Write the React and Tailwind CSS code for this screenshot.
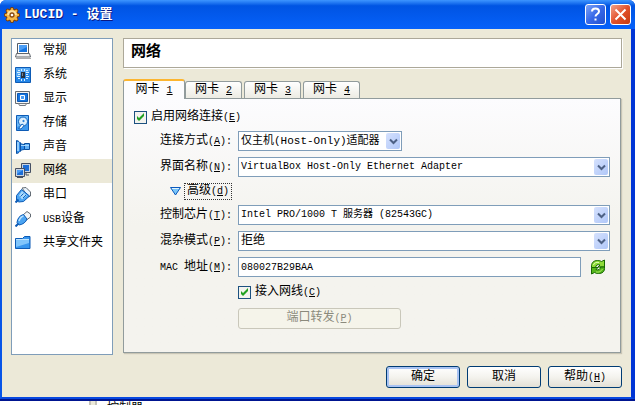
import React, { useState } from 'react';

const GearIcon = () => (
  <svg width="16" height="16" viewBox="0 0 16 16" aria-hidden="true">
    <g stroke="#7a3c08" strokeWidth="4.4" strokeLinecap="round">
      <path d="M8 2.2v11.6M2.2 8h11.6M3.8 3.8l8.4 8.4M12.2 3.8l-8.4 8.4" />
    </g>
    <circle cx="8" cy="8" r="6" fill="#7a3c08" />
    <g stroke="#f3b23c" strokeWidth="2.6" strokeLinecap="round">
      <path d="M8 2.2v11.6M2.2 8h11.6M3.8 3.8l8.4 8.4M12.2 3.8l-8.4 8.4" />
    </g>
    <circle cx="8" cy="8" r="5.3" fill="#f5b94a" />
    <path d="M3.2 8a4.8 4.8 0 0 1 9.6 0z" fill="#ffe3a0" />
    <circle cx="8" cy="8" r="2" fill="#fff" stroke="#8a4a10" strokeWidth="1.3" />
  </svg>
);

const GeneralIcon = () => (
  <svg width="16" height="16" viewBox="0 0 16 16" aria-hidden="true">
    <path d="M2.5.5h11v10h-11z" fill="#fff" stroke="#555d66" />
    <path d="M4 2h8v7H4z" fill="#1474e0" />
    <path d="M4 2h8v2L4 8z" fill="#4b9df5" />
    <path d="M1.5 10.5h13l1 3.5H.5z" fill="#f1f1f1" stroke="#60666c" />
    <path d="M1 15.500h15" stroke="#aaa" />
  </svg>
);

const SystemIcon = () => (
  <svg width="16" height="16" viewBox="0 0 16 16" aria-hidden="true">
    <path d="M.5.5h15v15H.5z" fill="#2486e8" stroke="#0d5bb5" />
    <path d="M1 1h14v3L1 10z" fill="#55a9f5" />
    <path
      d="M3 3.5h2M2 5.5h3M3 7.5h2M2 9.5h3M3 11.5h2M11 3.5h2M11 5.5h3M11 7.5h2M11 9.5h3M11 11.5h2M6.5 2v2M9.500 2v2M6.500 12v2M9.500 12v2"
      stroke="#d8efff"
    />
    <path d="M6 5h4v6H6z" fill="#26323f" />
    <path d="M7 6h1v3H7z" fill="#7d8893" />
  </svg>
);

const DisplayIcon = () => (
  <svg width="16" height="16" viewBox="0 0 16 16" aria-hidden="true">
    <path d="M.5.5h14v12H.5z" fill="#f4f4f4" stroke="#666c72" />
    <path d="M2.5 2.5h10v8h-10z" fill="#1474e0" stroke="#0b57b0" />
    <path d="M5.5 4.5h4v4h-4z" fill="#4b9df5" stroke="#fff" />
    <path d="M3.5 12.5h8l-1 2h-6z" fill="#f4f4f4" stroke="#73787e" />
  </svg>
);

const StorageIcon = () => (
  <svg width="16" height="16" viewBox="0 0 16 16" aria-hidden="true">
    <path d="M1.5.5h12v15h-12z" fill="#3c98ee" stroke="#0d5bb5" />
    <path d="M2 1h11v5L2 12z" fill="#6bb8f8" />
    <circle cx="8" cy="6.5" r="4.5" fill="#d5edff" stroke="#1264bd" />
    <circle cx="8.5" cy="6" r="1.7" fill="#2b84dc" stroke="#fff" />
    <path d="M3.5 13.5L7 9l2 1.5-3 3.5z" fill="#fff" stroke="#1264bd" />
  </svg>
);

const AudioIcon = () => (
  <svg width="16" height="16" viewBox="0 0 16 16" aria-hidden="true">
    <path d="M1.5 1.5c3 0 3 4 8 4v5c-5 0-5 4-8 4z" fill="#2f8ceb" stroke="#0b4f9f" />
    <path d="M9.5 4.5h5v6h-5z" fill="#63b1f6" stroke="#0b4f9f" />
    <path d="M3 3v9" stroke="#93cdfb" strokeWidth="2" />
    <path d="M5 6.500h9" stroke="#a8d8fd" />
    <path d="M5.500 3.500v9" stroke="#0b4f9f" />
  </svg>
);

const NetworkIcon = () => (
  <svg width="16" height="16" viewBox="0 0 16 16" aria-hidden="true">
    <path d="M6.5.5h9v9h-9z" fill="#c9d5e3" stroke="#454f62" />
    <path d="M8 2h6v6H8z" fill="#1d6fd8" />
    <path d="M11 10v2h3" stroke="#454f62" fill="none" />
    <path d="M.5 5.5h9v8h-9z" fill="#c9d5e3" stroke="#454f62" />
    <path d="M2 7h6v5H2z" fill="#1d6fd8" />
    <path d="M2 7h6L2 11z" fill="#4b9df5" />
    <path d="M2 14.500h6" stroke="#454f62" />
  </svg>
);

const SerialIcon = () => (
  <svg width="16" height="16" viewBox="0 0 16 16" aria-hidden="true">
    <path d="M7 1l4-.5L15.500 5v4l-2 1z" fill="#e9f3fc" stroke="#646c75" />
    <path d="M1.500 8.500l5-6 8 6.500-6 5.500-5 .5-2-2z" fill="#4ba4f2" stroke="#0d5bb5" />
    <path d="M4 8.500L7 4l5 4.500-5 4z" fill="#a9d9fc" />
    <path d="M5.500 9.500l3-3M8 11l3-3" stroke="#1264bd" />
    <path d="M.5 15.500l3-3" stroke="#0d5bb5" strokeWidth="2" />
  </svg>
);

const UsbIcon = () => (
  <svg width="16" height="16" viewBox="0 0 16 16" aria-hidden="true">
    <path d="M8 4l4-3.500L15.500 3v3l-4 3z" fill="#f3f6f8" stroke="#626a72" />
    <path d="M8.500 3.500c-4 1-6 4-6.500 8l2 2.500c4-.5 7-3 8-6z" fill="#4ba4f2" stroke="#0d5bb5" />
    <path d="M4 10c1-3 2.500-4.500 4.500-5" stroke="#b9e1fd" strokeWidth="1.5" fill="none" />
    <path d="M.5 15.500l3-3" stroke="#0d5bb5" strokeWidth="2" />
  </svg>
);

const FolderIcon = () => (
  <svg width="16" height="16" viewBox="0 0 16 16" aria-hidden="true">
    <path d="M.5 13.500V3.500h7l2-2h5.500v12z" fill="#3796ee" stroke="#0d5bb5" />
    <path d="M1 5h13v3L1 12z" fill="#80c5fb" />
    <path d="M1 4.500h13" stroke="#c0e5ff" />
  </svg>
);

const RefreshIcon = () => (
  <svg width="16" height="16" viewBox="0 0 16 16" aria-hidden="true">
    <path d="M1.5 8.500C1 3.500 4 1.500 7.500 1.500c2 0 3 .5 4 1l3-1.500v7H8l2-2c-2.500-1-4 0-4.500 2.500z" fill="#8edb38" stroke="#176800" />
    <path d="M14.500 8c.5 5-2.500 6.500-6 6.500-2 0-3-.5-4-1l-3 1.500V8.500H8l-2 2c2.500 1 4 0 4.500-2.500z" fill="#55b51b" stroke="#176800" />
    <path d="M3.500 6c.5-2 2.500-3 5.500-2.500" stroke="#dcffb0" fill="none" />
    <path d="M6 13c3 .5 5-.5 6.500-3" stroke="#a8ea60" fill="none" />
  </svg>
);

const sections = [
  { name: '常规', icon: GeneralIcon },
  { name: '系统', icon: SystemIcon },
  { name: '显示', icon: DisplayIcon },
  { name: '存储', icon: StorageIcon },
  { name: '声音', icon: AudioIcon },
  { name: '网络', icon: NetworkIcon },
  { name: '串口', icon: SerialIcon },
  { name: '设备', prefix: 'USB', icon: UsbIcon },
  { name: '共享文件夹', icon: FolderIcon },
];

const Key = ({ children, colon }) => (
  <span className="text-[10px]">
    (<u>{children}</u>){colon && ':'}
  </span>
);

const Field = ({ id, label, hotkey, children }) => (
  <div className="flex items-center">
    <label htmlFor={id} className="w-[104px] shrink-0 pr-1.5 text-right whitespace-nowrap">
      {label}
      <Key colon>{hotkey}</Key>
    </label>
    {children}
  </div>
);

const Select = ({ id, options, className }) => (
  <div className={`relative h-5 border border-[#7f9db9] bg-white ${className}`}>
    <select id={id} className="block h-full w-full appearance-none bg-transparent pr-5 pl-0.5 outline-none">
      {options.map((option) => (
        <option key={option}>{option}</option>
      ))}
    </select>
    <span className="pointer-events-none absolute inset-y-px right-px flex w-3.5 items-center justify-center rounded-xs bg-gradient-to-br from-[#d5e1fd] to-[#b0c7f8]">
      <svg width="9" height="7" viewBox="0 0 9 7" aria-hidden="true">
        <path d="M1 1.5l3.5 3.5L8 1.5" fill="none" stroke="#4d6185" strokeWidth="2" />
      </svg>
    </span>
  </div>
);

const Checkbox = ({ checked, onChange, label, hotkey }) => (
  <label className="flex h-4 items-center gap-1">
    <span className="relative flex">
      <input
        type="checkbox"
        checked={checked}
        onChange={onChange}
        className="size-[13px] appearance-none border border-[#1c5180] bg-[#f3f3ee]"
      />
      {checked && (
        <svg className="pointer-events-none absolute inset-0" width="13" height="13" viewBox="0 0 13 13" aria-hidden="true">
          <path d="M3 5v3l2 2 5-5V2L5 7z" fill="#21a121" />
        </svg>
      )}
    </span>
    <span>
      {label}
      <Key>{hotkey}</Key>
    </span>
  </label>
);

const buttonStyle =
  'h-[22px] w-[74px] rounded-[3px] border border-[#003c74] bg-gradient-to-b from-white via-[#f4f3ee] to-[#e3e0d5] whitespace-nowrap';

export default function App() {
  const [section, setSection] = useState('网络');
  const [tab, setTab] = useState(1);
  const [enabled, setEnabled] = useState(true);
  const [cable, setCable] = useState(true);
  const [advanced, setAdvanced] = useState(true);
  const [mac, setMac] = useState('080027B29BAA');

  return (
    <div className="flex min-h-screen flex-col bg-white font-['Liberation_Mono','Noto_Sans_CJK_SC',monospace] text-xs leading-4 text-black">
      <div className="flex flex-1 flex-col rounded-t-md border-b-2 border-[#001590] bg-[#0843dc]">
        {/* Title bar */}
        <header className="flex h-[29px] items-center gap-1 rounded-t-md bg-gradient-to-b from-[#3d95ff] via-[#0054e3] via-20% to-[#0661fa] px-1">
          <GearIcon />
          <h1 className="flex-1 text-[13px] font-bold text-white [text-shadow:1px_1px_#0a1883]">LUCID - 设置</h1>
          <button aria-label="帮助" className="flex size-[21px] items-center justify-center rounded-[3px] border border-white bg-gradient-to-br from-[#7da1f5] via-[#3768e8] to-[#2050cf]">
            <svg width="13" height="15" viewBox="0 0 13 15" aria-hidden="true">
              <path d="M3 4.5c0-4 7-4 7 0 0 2.5-3.5 2.5-3.5 5M6.5 11.5v2" fill="none" stroke="#fff" strokeWidth="2" />
            </svg>
          </button>
          <button aria-label="关闭" className="flex size-[21px] items-center justify-center rounded-[3px] border border-white bg-gradient-to-br from-[#f0a088] via-[#e3512a] to-[#c53a10]">
            <svg width="13" height="13" viewBox="0 0 13 13" aria-hidden="true">
              <path d="M1.5 1.5l10 10M11.5 1.5l-10 10" stroke="#fff" strokeWidth="2" />
            </svg>
          </button>
        </header>

        <div className="flex flex-1 flex-col border-r-4 border-b-2 border-l-2 border-r-[#0035d5] border-b-[#0848e0] border-l-[#0855e8] bg-[#ece9d8] p-[9px]">
          <div className="flex flex-1 gap-2.5">
            {/* Sections */}
            <nav className="w-[102px] border border-[#7f9db9] bg-white">
              {sections.map(({ name, prefix, icon: Icon }) => (
                <button
                  key={name}
                  onClick={() => setSection(name)}
                  className={`flex h-6 w-full items-center gap-3 pl-[3px] whitespace-nowrap ${section === name ? 'bg-[#ece9d8]' : ''}`}
                >
                  <Icon />
                  <span>
                    {prefix && <span className="text-[10px]">{prefix}</span>}
                    {name}
                  </span>
                </button>
              ))}
            </nav>

            <main className="flex flex-1 flex-col pb-0.5">
              <h2 className="h-[30px] border border-[#aca899] bg-white px-[7px] text-[15px] leading-7 font-bold shadow-[1px_1px_#fff]">{section}</h2>

              {/* Tabs */}
              <div role="tablist" className="mt-[11px] flex h-[19px] items-end gap-0.5">
                {[1, 2, 3, 4].map((n) => (
                  <button
                    key={n}
                    role="tab"
                    aria-selected={tab === n}
                    onClick={() => setTab(n)}
                    className={
                      tab === n
                        ? 'relative z-10 -mr-0.5 -mb-px h-5 w-[62px] rounded-t-[3px] border-x border-t-2 border-x-[#919b9c] border-t-[#fcb530] bg-[#fcfcfe]'
                        : 'h-[17px] w-[57px] rounded-t-[3px] border border-b-0 border-[#919b9c] bg-gradient-to-b from-white to-[#ecebe3] leading-4'
                    }
                  >
                    网卡 <u className="text-[10px]">{n}</u>
                  </button>
                ))}
              </div>

              <section className="mr-px flex flex-1 flex-col border border-[#919b9c] bg-gradient-to-b from-[#fcfcfe] via-[#f4f3ee] via-50% to-[#f4f3ee] px-2.5 pt-2.5 shadow-[1px_1px_1px_#c8c5b5]">
                <Checkbox checked={enabled} onChange={() => setEnabled(!enabled)} label="启用网络连接" hotkey="E" />

                <div className="mt-1.5 flex flex-col gap-1.5">
                  <Field id="attached" label="连接方式" hotkey="A">
                    <Select id="attached" options={['仅主机(Host-Only)适配器']} className="w-[164px] text-[11px]" />
                  </Field>
                  <Field id="name" label="界面名称" hotkey="N">
                    <Select id="name" options={['VirtualBox Host-Only Ethernet Adapter']} className="flex-1 text-[10px]" />
                  </Field>

                  <button onClick={() => setAdvanced(!advanced)} className="ml-9 flex h-4 items-center gap-[3px] self-start">
                    <svg width="11" height="9" viewBox="0 0 11 9" aria-hidden="true">
                      <path d="M.5.5h10L5.500 8z" fill="#79c5f8" stroke="#0b59bd" />
                      <path d="M2 1.5h7" stroke="#e0f4ff" />
                    </svg>
                    <span className="border border-dotted border-[#333] px-0.5 leading-[14px]">
                      高级<Key>d</Key>
                    </span>
                  </button>

                  {advanced && (
                    <>
                      <Field id="chip" label="控制芯片" hotkey="T">
                        <Select id="chip" options={['Intel PRO/1000 T 服务器 (82543GC)']} className="flex-1 text-[10px]" />
                      </Field>
                      <Field id="mode" label="混杂模式" hotkey="P">
                        <Select id="mode" options={['拒绝']} className="flex-1" />
                      </Field>
                      <Field id="mac" label={<><span className="text-[10px]">MAC </span>地址</>} hotkey="M">
                        <input
                          id="mac"
                          value={mac}
                          onChange={(e) => setMac(e.target.value)}
                          className="h-5 min-w-0 flex-1 border border-[#7f9db9] bg-white px-0.5 text-[10px] outline-none"
                        />
                        <button aria-label="刷新" className="mr-1 ml-[9px]">
                          <RefreshIcon />
                        </button>
                      </Field>
                      <div className="ml-[104px] flex flex-col items-start gap-2 pt-px">
                        <Checkbox checked={cable} onChange={() => setCable(!cable)} label="接入网线" hotkey="C" />
                        <button disabled className="h-[21px] w-[163px] rounded-[3px] border border-[#c9c7ba] bg-[#f5f4ea] text-[#8b8a7c]">
                          端口转发<Key>P</Key>
                        </button>
                      </div>
                    </>
                  )}
                </div>
              </section>
            </main>
          </div>

          {/* Dialog buttons */}
          <footer className="mt-[11px] flex justify-end gap-[7px]">
            <button className={`${buttonStyle} shadow-[inset_0_0_0_2px_#a9c3f3]`}>确定</button>
            <button className={buttonStyle}>取消</button>
            <button className={buttonStyle}>
              帮助<Key>H</Key>
            </button>
          </footer>
        </div>
      </div>

      <div className="flex h-1 overflow-hidden pl-[89px]">
        <span className="mr-2.5 w-2 border-x-2 border-[#c5c2b8] bg-[#ece9d8]" />
        <span>控制器</span>
      </div>
    </div>
  );
}
